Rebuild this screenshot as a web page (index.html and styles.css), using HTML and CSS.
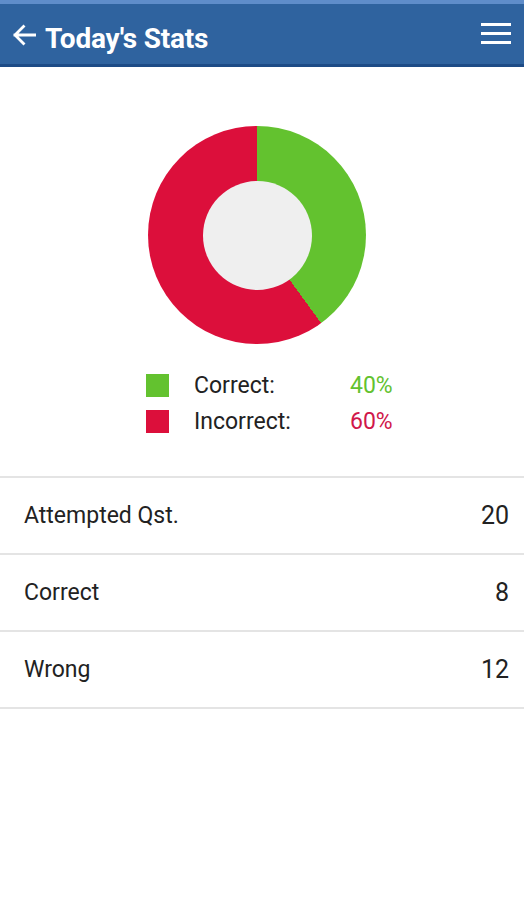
FILE: index.html
```html
<!DOCTYPE html>
<html>
<head>
<meta charset="utf-8">
<link rel="stylesheet" href="styles.css">
</head>
<body>
<header class="appbar">
  <div class="appbar-left">
    <svg class="back" width="24" height="22" viewBox="0 0 24 22"><path d="M23 11H3M11.5 2.5L3 11l8.5 8.5" fill="none" stroke="#fff" stroke-width="2.8" stroke-linecap="square"/></svg>
    <h1 class="title">Today's Stats</h1>
  </div>
  <svg class="menu" width="30" height="22" viewBox="0 0 30 22"><rect x="0" y="1" width="30" height="3" fill="#fff"/><rect x="0" y="10" width="30" height="3" fill="#fff"/><rect x="0" y="19" width="30" height="3" fill="#fff"/></svg>
</header>
<section class="chart">
  <div class="donut"><div class="hole"></div></div>
  <div class="legend">
    <span class="swatch green"></span><span class="lbl">Correct:</span><span class="pct green-t">40%</span>
    <span class="swatch red"></span><span class="lbl">Incorrect:</span><span class="pct red-t">60%</span>
  </div>
</section>
<ul class="stats">
  <li class="row"><span>Attempted Qst.</span><span class="num">20</span></li>
  <li class="row"><span>Correct</span><span class="num">8</span></li>
  <li class="row"><span>Wrong</span><span class="num">12</span></li>
</ul>
</body>
</html>
```
FILE: styles.css
```css
html, body { margin: 0; padding: 0; background: #fff; }
body { font-family: Roboto, "Liberation Sans", sans-serif; color: #222; }
.appbar {
  height: 60px;
  background: #2f639f;
  border-top: 4px solid #5f8dca;
  border-bottom: 3px solid #1d4b86;
  display: flex;
  align-items: center;
  justify-content: space-between;
  padding: 0 13px 0 12px;
}
.appbar-left { display: flex; align-items: center; gap: 9px; }
.back { display: block; margin-top: 2px; }
.title { margin: 0; color: #fff; font-size: 28px; font-weight: 700; letter-spacing: -0.2px; line-height: 1; margin-top: 10px; }
.menu { display: block; margin-top: -2px; }
.chart { display: flex; flex-direction: column; align-items: center; padding-top: 59px; height: 411px; box-sizing: border-box; border-bottom: 2px solid #e4e4e4; }
.donut {
  flex-shrink: 0;
  width: 218px; height: 218px; border-radius: 50%;
  margin-right: 10px;
  background: conic-gradient(#63c22f 0 40%, #dc0f3b 40% 100%);
  display: flex; align-items: center; justify-content: center;
}
.hole { width: 109px; height: 109px; border-radius: 50%; background: #efefef; }
.legend {
  align-self: flex-start;
  margin: 30px 0 0 146px;
  display: grid;
  grid-template-columns: 23px 131px auto;
  column-gap: 25px;
  row-gap: 13px;
  align-items: center;
  font-size: 23px;
}
.swatch { width: 23px; height: 23px; display: block; }
.green { background: #63c22f; }
.red { background: #dc0f3b; }
.lbl { color: #222; line-height: 23px; }
.pct { line-height: 23px; }
.green-t { color: #63c22f; }
.red-t { color: #d0174a; }
.stats { list-style: none; margin: 0; padding: 0; }
.row {
  height: 75px;
  border-bottom: 2px solid #e4e4e4;
  display: flex; align-items: center; justify-content: space-between;
  padding: 0 15px 0 24px;
  font-size: 23px;
  color: #222;
}
.num { font-size: 25px; }
```
